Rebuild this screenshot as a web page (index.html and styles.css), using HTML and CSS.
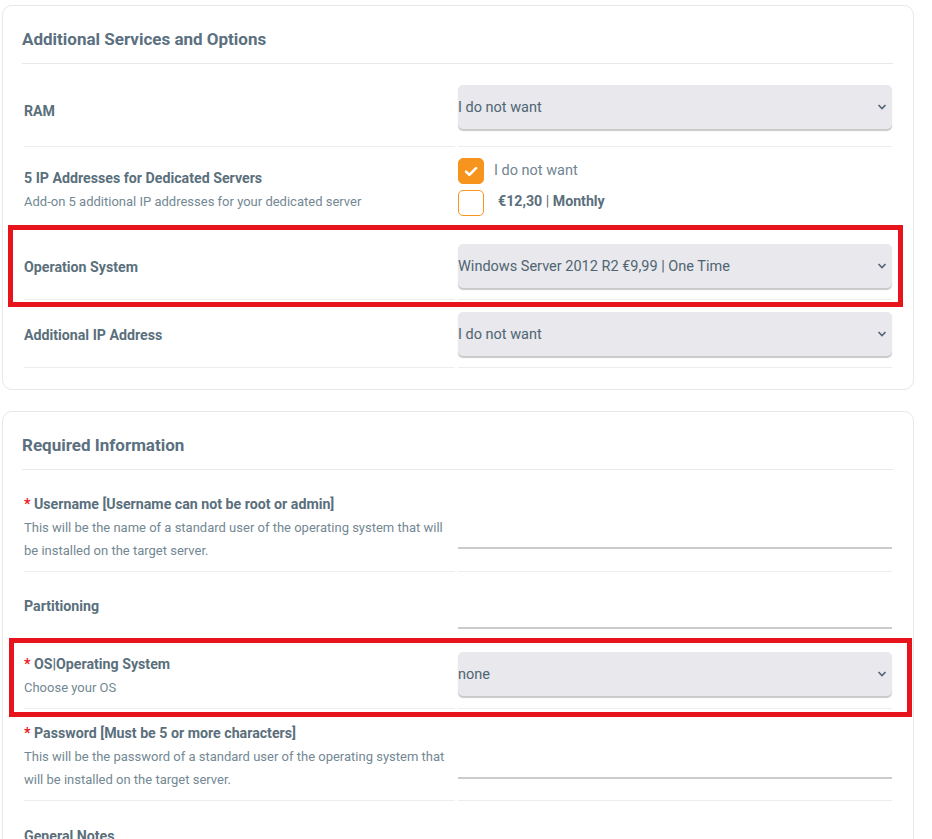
FILE: index.html
```html
<!DOCTYPE html>
<html lang="en">
<head>
    <meta charset="UTF-8">
    <meta name="viewport" content="width=device-width, initial-scale=1.0">
    <title>Configure Server</title>
    <link rel="stylesheet" href="styles.css">
</head>
<body>
    <div class="page">
        <div class="panel">
            <h3 class="panel-title">Additional Services and Options</h3>

            <div class="field-row row-ram">
                <div class="field-label"><span class="label-name">RAM</span></div>
                <div class="field-input">
                    <div class="select-wrap">
                        <select class="select-box">
                            <option>I do not want</option>
                        </select>
                        <svg class="chevron" width="10" height="6" viewBox="0 0 10 6"><path d="M1.5 1 L5 4.5 L8.5 1" fill="none" stroke="#4f6572" stroke-width="1.6"/></svg>
                    </div>
                </div>
            </div>

            <div class="field-row row-ip">
                <div class="field-label">
                    <span class="label-name">5 IP Addresses for Dedicated Servers</span>
                    <span class="label-desc">Add-on 5 additional IP addresses for your dedicated server</span>
                </div>
                <div class="field-input">
                    <label class="check-line">
                        <span class="check checked">
                            <svg width="14" height="11" viewBox="0 0 14 11"><path d="M2 5.6 L5.4 8.8 L12 2.2" fill="none" stroke="#fff" stroke-width="2.6" stroke-linecap="round" stroke-linejoin="round"/></svg>
                        </span>
                        <span class="check-text">I do not want</span>
                    </label>
                    <label class="check-line">
                        <span class="check"></span>
                        <span class="check-price"><b>€12,30</b> | <b>Monthly</b></span>
                    </label>
                </div>
            </div>

            <div class="field-row row-os">
                <div class="field-label"><span class="label-name">Operation System</span></div>
                <div class="field-input">
                    <div class="select-wrap">
                        <select class="select-box">
                            <option>Windows Server 2012 R2 €9,99 | One Time</option>
                        </select>
                        <svg class="chevron" width="10" height="6" viewBox="0 0 10 6"><path d="M1.5 1 L5 4.5 L8.5 1" fill="none" stroke="#4f6572" stroke-width="1.6"/></svg>
                    </div>
                </div>
                <div class="mark mark-os"></div>
            </div>

            <div class="field-row row-addip">
                <div class="field-label"><span class="label-name">Additional IP Address</span></div>
                <div class="field-input">
                    <div class="select-wrap">
                        <select class="select-box">
                            <option>I do not want</option>
                        </select>
                        <svg class="chevron" width="10" height="6" viewBox="0 0 10 6"><path d="M1.5 1 L5 4.5 L8.5 1" fill="none" stroke="#4f6572" stroke-width="1.6"/></svg>
                    </div>
                </div>
            </div>
        </div>

        <div class="panel">
            <h3 class="panel-title">Required Information</h3>

            <div class="field-row row-user">
                <div class="field-label">
                    <span class="label-name"><span class="req">*</span> Username [Username can not be root or admin]</span>
                    <span class="label-desc">This will be the name of a standard user of the operating system that will be installed on the target server.</span>
                </div>
                <div class="field-input input-bottom">
                    <input type="text" class="text-box">
                </div>
            </div>

            <div class="field-row row-part">
                <div class="field-label"><span class="label-name">Partitioning</span></div>
                <div class="field-input input-bottom">
                    <input type="text" class="text-box">
                </div>
            </div>

            <div class="field-row row-osreq">
                <div class="field-label">
                    <span class="label-name"><span class="req">*</span> OS|Operating System</span>
                    <span class="label-desc">Choose your OS</span>
                </div>
                <div class="field-input">
                    <div class="select-wrap">
                        <select class="select-box">
                            <option>none</option>
                        </select>
                        <svg class="chevron" width="10" height="6" viewBox="0 0 10 6"><path d="M1.5 1 L5 4.5 L8.5 1" fill="none" stroke="#4f6572" stroke-width="1.6"/></svg>
                    </div>
                </div>
                <div class="mark mark-osreq"></div>
            </div>

            <div class="field-row row-pass">
                <div class="field-label">
                    <span class="label-name"><span class="req">*</span> Password [Must be 5 or more characters]</span>
                    <span class="label-desc">This will be the password of a standard user of the operating system that will be installed on the target server.</span>
                </div>
                <div class="field-input input-bottom">
                    <input type="password" class="text-box">
                </div>
            </div>

            <div class="field-row row-notes">
                <div class="field-label"><span class="label-name">General Notes</span></div>
                <div class="field-input"></div>
            </div>
        </div>
    </div>
</body>
</html>
```

FILE: styles.css
```css
body {
    margin: 0;
    font-family: Roboto, "Liberation Sans", sans-serif;
    background-color: #fff;
    color: #5a6f7c;
}
.page {
    padding: 5px 0 0 2px;
}
.panel {
    width: 912px;
    box-sizing: border-box;
    border: 1px solid #e7e7e7;
    border-radius: 10px;
    padding: 19px 20px 21px 19px;
    margin-bottom: 21px;
}
.panel-title {
    margin: 0;
    font-size: 17px;
    font-weight: 700;
    line-height: 28px;
    padding-bottom: 10px;
    border-bottom: 1px solid #e9e9e9;
    color: #5b7080;
}
.field-row {
    position: relative;
    display: grid;
    grid-template-columns: 431px 1fr;
    column-gap: 3px;
    margin: 0 1px 0 2px;
}
.field-label,
.field-input {
    border-bottom: 1px solid #ededed;
}
.field-label {
    display: flex;
    flex-direction: column;
}
.label-name {
    font-size: 14.2px;
    font-weight: 700;
    line-height: 20px;
    color: #5a6f7c;
}
.label-desc {
    font-size: 13px;
    line-height: 23px;
    padding-top: 2px;
    color: #738893;
}
.req {
    color: #e8141c;
}
.select-wrap {
    position: relative;
}
.select-box {
    display: block;
    width: 100%;
    height: 44px;
    padding: 0;
    border: none;
    border-radius: 5px;
    background-color: #e8e8ed;
    box-shadow: 0 2px 1px #c9c9c9;
    font-family: inherit;
    font-size: 14.5px;
    color: #4f6572;
    appearance: none;
    -webkit-appearance: none;
    outline: none;
}
.chevron {
    position: absolute;
    right: 5px;
    top: 19px;
}
.check-line {
    display: flex;
    align-items: center;
    height: 26px;
}
.check-line + .check-line {
    margin-top: 6px;
}
.check {
    width: 26px;
    height: 26px;
    box-sizing: border-box;
    border: 1px solid #f7941d;
    border-radius: 5px;
    display: flex;
    align-items: center;
    justify-content: center;
}
.check.checked {
    background-color: #f7941d;
}
.check-text {
    margin-left: 10px;
    font-size: 14.5px;
    color: #6f8591;
    margin-top: -2px;
}
.check-price {
    margin-left: 14px;
    font-size: 14.2px;
    color: #5b6f7c;
    margin-top: -4px;
}
.text-box {
    display: block;
    width: 100%;
    box-sizing: border-box;
    height: 40px;
    border: none;
    border-bottom: 2px solid #cbcbcb;
    background: transparent;
    outline: none;
}
.input-bottom {
    display: flex;
    flex-direction: column;
    justify-content: flex-end;
}

/* per row spacing */
.row-ram .field-label { padding-top: 37px; }
.row-ram .field-input { padding: 21px 0 17px; }
.row-ip .field-label { padding-top: 21px; }
.row-ip .field-input { padding: 11px 0 12px; }
.row-os .field-label { padding-top: 28px; }
.row-os .field-input { padding: 15px 0 11px; }
.row-addip .field-label { padding-top: 25px; }
.row-addip .field-input { padding: 12px 0 11px; }
.row-user .field-label { padding: 24px 0 9px; }
.row-user .field-input { padding-bottom: 22px; }
.row-part .field-label { padding: 24px 0 24px; }
.row-part .field-input { padding-bottom: 11px; }
.row-osreq .field-label { padding: 13px 0 9px; }
.row-osreq .field-input { padding: 11px 0 12px; }
.row-pass .field-label { padding: 14px 0 9px; }
.row-pass .field-input { padding-bottom: 21px; }
.row-notes .field-label { padding: 25px 0 24px; }

/* red highlight boxes */
.mark {
    position: absolute;
    border: 5px solid #e8141c;
    pointer-events: none;
}
.mark-os {
    left: -16px;
    top: -4px;
    right: -11px;
    bottom: -7px;
}
.mark-osreq {
    left: -15px;
    top: -3px;
    right: -20px;
    bottom: -8px;
}
```
